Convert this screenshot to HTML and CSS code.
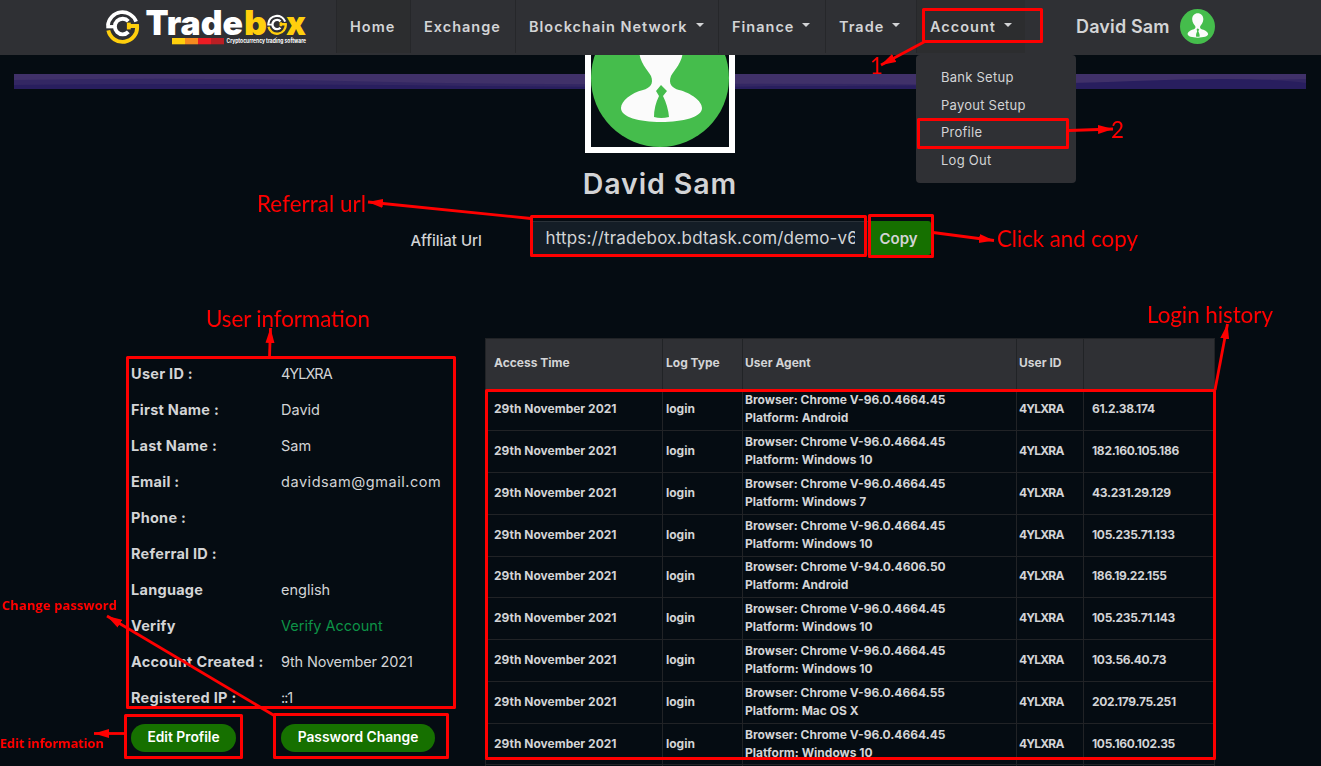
FILE: index.html
```html
<!DOCTYPE html>
<html lang="en">
<head>
<meta charset="utf-8">
<title>Tradebox - Profile</title>
<link rel="stylesheet" href="styles.css">
</head>
<body>
<svg class="defs" width="0" height="0" aria-hidden="true">
  <symbol id="avatar" viewBox="0 0 138 138">
    <circle cx="69" cy="69" r="69" fill="#45bd4c"/>
    <path fill="#fbfbfb" d="M70 17C57 17 48 27 48 40C48 54 57 61 60 67C63 75 59 79 52 81C40 84 30 92 30 99C30 108 48 113 70 113C92 113 111 108 111 99C111 92 100 84 88 81C81 79 77 75 80 67C83 61 92 54 92 40C92 27 83 17 70 17Z"/>
    <path fill="#45bd4c" d="M70 76L76 82L72 87Q77 97 78 108Q70 110 63 108Q63 97 68 87L65 82Z"/>
  </symbol>
  <symbol id="emblem" viewBox="0 0 36 36">
    <g fill="none">
      <path stroke="#fff" stroke-width="3.8" d="M3 17A15 15 0 0 1 32 13"/>
      <path stroke="#fff" stroke-width="3.4" d="M1.3 18.2H10"/>
      <path stroke="#ffcf0d" stroke-width="4" d="M3.4 22A15 15 0 0 0 33 17.500H23"/>
      <path stroke="#fff" stroke-width="4" d="M24 12.600A8 8 0 1 0 24 23.500"/>
      <path stroke="#ffcf0d" stroke-width="4" d="M24.500 14V21"/>
    </g>
  </symbol>
</svg>

<header class="topbar">
  <a class="logo">
    <svg width="206" height="55" viewBox="105 0 206 55">
      <use href="#emblem" x="105" y="9" width="35" height="35"/>
      <g class="logo-word">
        <text x="145.500" y="34.500" fill="#fff" textLength="97.500" lengthAdjust="spacingAndGlyphs">Trade</text>
        <text x="244" y="34.500" fill="#ffcf0d" textLength="23" lengthAdjust="spacingAndGlyphs">b</text>
        <text x="286" y="34.500" fill="#ffcf0d" textLength="20" lengthAdjust="spacingAndGlyphs">x</text>
      </g>
      <use href="#emblem" x="266.500" y="14" width="21" height="21"/>
      <rect x="172" y="38" width="13" height="6.300" fill="#ffcf0d"/>
      <rect x="185" y="38" width="13" height="6.300" fill="#f68b1f"/>
      <rect x="198" y="38" width="13" height="6.300" fill="#ec1c24"/>
      <rect x="211" y="38" width="13" height="6.300" fill="#b91f24"/>
      <text class="logo-tag" x="226.500" y="43" textLength="79.500" lengthAdjust="spacingAndGlyphs">Cryptocurrency trading software</text>
    </svg>
  </a>
  <nav class="nav">
    <a class="nav-item active">Home</a>
    <a class="nav-item">Exchange</a>
    <a class="nav-item">Blockchain Network<i class="caret"></i></a>
    <a class="nav-item">Finance<i class="caret"></i></a>
    <a class="nav-item">Trade<i class="caret"></i></a>
    <div class="nav-item open">Account<i class="caret"></i>
      <div class="dropdown">
        <a>Bank Setup</a>
        <a>Payout Setup</a>
        <a>Profile</a>
        <a>Log Out</a>
      </div>
    </div>
  </nav>
  <div class="account"><span>David Sam</span><svg width="35" height="35"><use href="#avatar"/></svg></div>
</header>

<svg class="banner" viewBox="0 0 1292 15" preserveAspectRatio="none">
  <rect width="1292" height="15" fill="#403169"/>
  <path fill="#332763" d="M0 6Q180 3 330 7T640 10T960 11L1292 5V15H0Z"/>
  <path fill="#281e5e" d="M0 11Q200 9 420 11.500T760 12Q1000 12 1120 7T1292 9V15H0Z"/>
</svg>

<main class="page">
  <section class="profile">
    <div class="photo"><svg width="138" height="138"><use href="#avatar"/></svg></div>
    <h1>David Sam</h1>
    <div class="affiliate">
      <label>Affiliat Url</label>
      <div class="url"><span>https://tradebox.bdtask.com/demo-v6</span></div>
      <button class="copy">Copy</button>
    </div>
  </section>

  <div class="columns">
    <section class="info">
      <dl>
        <dt>User ID :</dt><dd class="code">4YLXRA</dd>
        <dt>First Name :</dt><dd>David</dd>
        <dt>Last Name :</dt><dd>Sam</dd>
        <dt>Email :</dt><dd class="email">davidsam@gmail.com</dd>
        <dt>Phone :</dt><dd></dd>
        <dt>Referral ID :</dt><dd></dd>
        <dt>Language</dt><dd>english</dd>
        <dt>Verify</dt><dd class="verify">Verify Account</dd>
        <dt>Account Created :</dt><dd class="date">9th November 2021</dd>
        <dt>Registered IP :</dt><dd class="code">::1</dd>
      </dl>
      <div class="actions">
        <button class="pill">Edit Profile</button>
        <button class="pill wide">Password Change</button>
      </div>
    </section>

    <table class="history">
      <colgroup><col class="c1"><col class="c2"><col class="c3"><col class="c4"><col class="c5"></colgroup>
      <thead><tr><th>Access Time</th><th>Log Type</th><th>User Agent</th><th>User ID</th><th></th></tr></thead>
      <tbody>
        <tr><td>29th November 2021</td><td>login</td><td>Browser: Chrome V-96.0.4664.45<br>Platform: Android</td><td>4YLXRA</td><td>61.2.38.174</td></tr>
        <tr><td>29th November 2021</td><td>login</td><td>Browser: Chrome V-96.0.4664.45<br>Platform: Windows 10</td><td>4YLXRA</td><td>182.160.105.186</td></tr>
        <tr><td>29th November 2021</td><td>login</td><td>Browser: Chrome V-96.0.4664.45<br>Platform: Windows 7</td><td>4YLXRA</td><td>43.231.29.129</td></tr>
        <tr><td>29th November 2021</td><td>login</td><td>Browser: Chrome V-96.0.4664.45<br>Platform: Windows 10</td><td>4YLXRA</td><td>105.235.71.133</td></tr>
        <tr><td>29th November 2021</td><td>login</td><td>Browser: Chrome V-94.0.4606.50<br>Platform: Android</td><td>4YLXRA</td><td>186.19.22.155</td></tr>
        <tr><td>29th November 2021</td><td>login</td><td>Browser: Chrome V-96.0.4664.45<br>Platform: Windows 10</td><td>4YLXRA</td><td>105.235.71.143</td></tr>
        <tr><td>29th November 2021</td><td>login</td><td>Browser: Chrome V-96.0.4664.45<br>Platform: Windows 10</td><td>4YLXRA</td><td>103.56.40.73</td></tr>
        <tr><td>29th November 2021</td><td>login</td><td>Browser: Chrome V-96.0.4664.55<br>Platform: Mac OS X</td><td>4YLXRA</td><td>202.179.75.251</td></tr>
        <tr><td>29th November 2021</td><td>login</td><td>Browser: Chrome V-96.0.4664.45<br>Platform: Windows 10</td><td>4YLXRA</td><td>105.160.102.35</td></tr>
        <tr class="last"><td></td><td></td><td></td><td></td><td></td></tr>
      </tbody>
    </table>
  </div>
</main>

<svg class="notes" width="1321" height="766" viewBox="0 0 1321 766">
  <defs>
    <marker id="head" viewBox="0 0 15 10" refX="15" refY="5" markerWidth="15" markerHeight="10" markerUnits="userSpaceOnUse" orient="auto"><path d="M0 .5L15 5L0 9.500Z" fill="#f00"/></marker>
  </defs>
  <g class="boxes">
    <rect x="923.500" y="9.500" width="118" height="32"/>
    <rect x="918.500" y="119.500" width="149" height="28"/>
    <rect x="531.500" y="216.500" width="334" height="39"/>
    <rect x="869.500" y="215.500" width="63" height="41"/>
    <rect x="127.500" y="357.500" width="327" height="350"/>
    <rect x="486.500" y="390.500" width="728" height="368"/>
    <rect x="125.500" y="715.500" width="116" height="42"/>
    <rect x="274.500" y="714.500" width="173" height="43"/>
  </g>
  <g class="arrows">
    <path d="M924 42L881 65"/>
    <path d="M1069 130.500L1113 129"/>
    <path d="M531 218.500L368 202"/>
    <path d="M933 232.500L994 240.500"/>
    <path d="M269.500 357L270.500 328"/>
    <path d="M1215 390L1227.500 324"/>
    <path d="M275 716L107 616"/>
    <path d="M125 733.500L94 733.500"/>
  </g>
  <g class="big">
    <text x="870" y="74">1</text>
    <text x="1111" y="137.500">2</text>
    <text x="257" y="211.500" textLength="109">Referral url</text>
    <text x="997" y="246.500" textLength="141">Click and copy</text>
    <text x="206" y="326.500" textLength="164">User information</text>
    <text x="1147" y="322.500" textLength="126">Login history</text>
  </g>
  <g class="small">
    <text x="2" y="610" textLength="115">Change password</text>
    <text x="0" y="748" textLength="104">Edit information</text>
  </g>
</svg>
</body>
</html>
```
FILE: styles.css
```css
* { box-sizing: border-box; }

body {
  margin: 0;
  height: 766px;
  overflow: hidden;
  background: #050c12;
  color: #d3d4d6;
  font-family: Inter, "Liberation Sans", sans-serif;
  font-size: 15px;
}

svg { display: block; }
.defs { position: absolute; }

/* Top bar */
.topbar {
  position: fixed;
  top: 0;
  left: 0;
  right: 0;
  z-index: 2;
  display: flex;
  height: 55px;
  padding-left: 105px;
  background: #2f3034;
}
.logo { width: 231px; }
.logo-word { font: 900 33.500px Inter, sans-serif; }
.logo-tag { font: 700 5.500px Inter, sans-serif; fill: #fff; }

.nav {
  display: grid;
  grid-template-columns: 74px 105px 203px 107px 91px 109px;
  height: 53px;
}
.nav-item {
  position: relative;
  display: flex;
  align-items: center;
  padding-left: 13px;
  border-left: 1px solid #26272a;
  font-size: 14.500px;
  font-weight: 600;
  letter-spacing: 1px;
  white-space: nowrap;
}
.nav-item.active, .nav-item.open { background: #2c2d2f; }
.caret {
  margin: -3px 0 0 8px;
  border: 4px solid transparent;
  border-top-color: #d3d4d6;
  border-bottom: 0;
}
.dropdown {
  position: absolute;
  top: 55px;
  left: -1px;
  display: grid;
  align-content: start;
  grid-auto-rows: 27.700px;
  width: 160px;
  height: 128px;
  padding: 8px 0 0 25px;
  background: #2f3034;
  border-radius: 4px;
  font-size: 13px;
  font-weight: 400;
  letter-spacing: .25px;
  line-height: 28px;
}
.account {
  display: flex;
  align-items: center;
  gap: 10px;
  height: 53px;
  margin-left: 51px;
  font-size: 18px;
  font-weight: 600;
  letter-spacing: .15px;
}

.banner {
  position: absolute;
  top: 74px;
  left: 14px;
  width: 1292px;
  height: 15px;
}

/* Profile header */
.page {
  position: relative;
  height: 766px;
  padding-top: 3px;
  overflow: hidden;
}
.profile {
  display: flex;
  flex-direction: column;
  align-items: center;
  width: 1320px;
}
.photo { width: 150px; height: 150px; border: 6px solid #fff; background: #050c12; }
h1 {
  margin: 11px 0 0;
  font-size: 28.500px;
  font-weight: 600;
  letter-spacing: .9px;
  line-height: 40px;
}
.affiliate {
  display: grid;
  grid-template-columns: 122px 338px 60px;
  grid-template-rows: 34px;
  align-self: flex-start;
  margin: 17px 0 0 410.500px;
}
.affiliate label { line-height: 39px; font-weight: 500; }
.url {
  padding: 0 11px 0 13px;
  border-top: 1px solid #2a3138;
  background: #141d26;
  font-size: 17px;
  letter-spacing: .15px;
  line-height: 33px;
}
.url span { display: block; overflow: hidden; width: 309px; white-space: nowrap; }
.copy {
  padding: 0 4px 0 0;
  border: 0;
  border-radius: 0 3px 3px 0;
  background: #167000;
  color: #d3d4d6;
  font: 600 15px Inter, sans-serif;
}

/* Details and history */
.columns {
  display: grid;
  grid-template-columns: 354px 729px;
  align-items: start;
  padding-left: 131px;
  margin-top: 83px;
}
.info { padding-top: 18px; }
dl {
  display: grid;
  grid-template-columns: 150px 1fr;
  grid-auto-rows: 36px;
  margin: 0;
  line-height: 36px;
  font-size: 14.500px;
}
dt { font-weight: 700; letter-spacing: .27px; }
dd { margin: 0; }
.code { letter-spacing: -1px; }
.email { letter-spacing: .55px; }
.date { letter-spacing: -.17px; }
.verify { color: #0d9347; }
.actions { display: flex; gap: 45px; margin-top: 8px; }
.pill {
  width: 105px;
  height: 28px;
  padding: 0 0 2px;
  border: 0;
  border-radius: 14px;
  background: #167000;
  color: #fff;
  font: 600 13.800px Inter, sans-serif;
}
.pill.wide { width: 154px; }

.history {
  width: 729px;
  table-layout: fixed;
  border-collapse: collapse;
  font-size: 12px;
  font-weight: 700;
  line-height: 18px;
}
.c1 { width: 177px; }
.c2 { width: 80px; }
.c3 { width: 274px; }
.c4 { width: 67px; }
.c5 { width: 131px; }
.history th, .history td {
  height: 41.780px;
  padding: 0 0 1px 3px;
  border: 1px solid #212326;
  text-align: left;
  white-space: nowrap;
}
.history th { height: 50.500px; background: #2f3034; }
.history td:nth-child(3), .history th:nth-child(3) { padding-left: 2px; }
.history th:nth-child(4) { padding-left: 2px; }
.history td:nth-child(4) { padding-left: 2px; letter-spacing: -.8px; }
.history th:first-child, .history td:first-child { padding-left: 8px; }
.history td:last-child { padding-left: 8px; letter-spacing: -.3px; }

/* Red callouts */
.notes { position: absolute; top: 0; left: 0; z-index: 3; pointer-events: none; }
.boxes rect { fill: none; stroke: #f00; stroke-width: 3; stroke-linejoin: round; }
.arrows path { fill: none; stroke: #f00; stroke-width: 2.800; marker-end: url(#head); }
.big { fill: #f00; font: 400 22.500px Lato, sans-serif; }
.small { fill: #f00; font: 700 13px "Open Sans", sans-serif; }
```
